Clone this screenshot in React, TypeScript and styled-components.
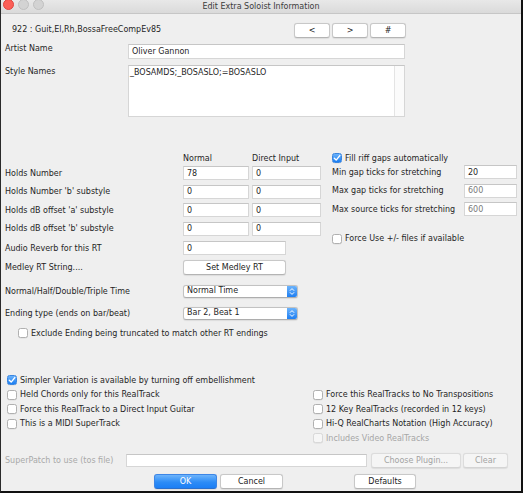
import React from "react";
import styled, { createGlobalStyle } from "styled-components";

const GlobalStyle = createGlobalStyle`
  html, body { margin: 0; padding: 0; }
  body {
    font-family: "DejaVu Sans", "Liberation Sans", sans-serif;
    font-size: 8px;
    color: #1f1f1f;
    background: #efefef;
  }
  * { box-sizing: border-box; }
`;

const Window = styled.div`
  width: 523px;
  height: 493px;
  background: #efefef;
  border-left: 1px solid #2a2a2a;
  border-right: 2px solid #111;
  border-bottom: 2px solid #111;
  display: flex;
  flex-direction: column;
  overflow: hidden;
`;

const TitleBar = styled.div`
  height: 14px;
  flex: none;
  display: grid;
  grid-template-columns: 1fr auto 1fr;
  align-items: center;
  background: linear-gradient(#e8e8e8, #dadada);
  border-bottom: 1px solid #c6c6c6;
`;

const Lights = styled.div`
  display: flex;
  gap: 4px;
  padding-left: 2px;
  margin-top: -4px;
`;

const Light = styled.span<{ $color: string; $edge: string }>`
  width: 11px;
  height: 11px;
  border-radius: 50%;
  background: ${(p) => p.$color};
  border: 1px solid ${(p) => p.$edge};
`;

const Title = styled.div`
  color: #3c3c3c;
  font-size: 8px;
  margin-top: -1px;
`;

const Body = styled.div`
  display: flex;
  flex-direction: column;
  padding-left: 4px;
`;

const TopRow = styled.div`
  margin-top: 8px;
  width: 401px;
  height: 16px;
  display: flex;
  align-items: center;
`;

const TrackName = styled.div`
  padding-left: 7px;
  margin-top: -2px;
  flex: 1;
`;

const NavGroup = styled.div`
  display: flex;
  gap: 2px;
`;

const Button = styled.button<{ $w: number; $primary?: boolean; $disabled?: boolean }>`
  width: ${(p) => p.$w}px;
  height: 15px;
  padding: 0;
  margin: 0;
  font-family: inherit;
  font-size: 8px;
  border-radius: 3px;
  border: 1px solid ${(p) => (p.$primary ? "#3d86e6" : p.$disabled ? "#dcdcdc" : "#c8c8c8")};
  border-bottom-color: ${(p) => (p.$primary ? "#2a6fcc" : p.$disabled ? "#d4d4d4" : "#b4b4b4")};
  background: ${(p) =>
    p.$primary
      ? "linear-gradient(#6db4fb, #2d8cf6 55%, #1c7ff5)"
      : p.$disabled
      ? "#f5f5f5"
      : "#ffffff"};
  color: ${(p) => (p.$primary ? "#ffffff" : p.$disabled ? "#a3a3a3" : "#222")};
  box-shadow: 0 0.5px 1px rgba(0, 0, 0, 0.08);
  display: flex;
  align-items: center;
  justify-content: center;
`;

const FormRow = styled.div<{ $h: number; $mt: number }>`
  display: grid;
  grid-template-columns: 123px 277px;
  height: ${(p) => p.$h}px;
  margin-top: ${(p) => p.$mt}px;
  align-items: start;
`;

const FormLabel = styled.div<{ $pt: number }>`
  padding-top: ${(p) => p.$pt}px;
`;

const TextBox = styled.div<{ $w?: number; $h?: number; $muted?: boolean }>`
  width: ${(p) => (p.$w ? `${p.$w}px` : "100%")};
  height: ${(p) => p.$h ?? 14}px;
  background: #fff;
  border: 1px solid #d6d6d6;
  border-top-color: #c6c6c6;
  padding-left: 3px;
  display: flex;
  align-items: center;
  color: ${(p) => (p.$muted ? "#7a7a7a" : "#1f1f1f")};
  overflow: hidden;
  white-space: nowrap;
`;

const TextArea = styled.div`
  height: 52px;
  background: #fff;
  border: 1px solid #d6d6d6;
  border-top-color: #c6c6c6;
  display: grid;
  grid-template-columns: 1fr 10px;
`;

const AreaText = styled.div`
  padding: 2px 1px;
`;

const ScrollTrack = styled.div`
  border-left: 1px solid #e4e4e4;
  background: #fbfbfb;
`;

const Middle = styled.div`
  margin-top: 33px;
  display: flex;
  align-items: flex-start;
`;

const LeftPanel = styled.div`
  width: 316px;
  display: flex;
  flex-direction: column;
`;

const GridRow = styled.div<{ $h: number; $mt?: number }>`
  display: grid;
  grid-template-columns: 175px 66px 69px;
  column-gap: 3px;
  align-items: center;
  height: ${(p) => p.$h}px;
  margin-top: ${(p) => p.$mt ?? 0}px;
`;

const ColHead = styled.div`
  padding-top: 2px;
`;

const Span = styled.div<{ $span: number }>`
  grid-column: span ${(p) => p.$span};
`;

const Popup = styled.div`
  width: 115px;
  height: 13px;
  background: #fff;
  border: 1px solid #c2c2c2;
  border-bottom-color: #adadad;
  border-radius: 3px;
  display: grid;
  grid-template-columns: 1fr 10px;
  overflow: hidden;
  box-shadow: 0 0.5px 1px rgba(0, 0, 0, 0.08);
`;

const PopupText = styled.div`
  padding-left: 3px;
  display: flex;
  align-items: center;
  margin-top: -1px;
`;

const Stepper = styled.div`
  background: linear-gradient(#6cb3fb, #1f7ff2);
  display: flex;
  align-items: center;
  justify-content: center;
`;

const CheckRow = styled.label<{ $h: number; $indent?: number; $mt?: number; $disabled?: boolean }>`
  display: flex;
  align-items: center;
  gap: 3px;
  height: ${(p) => p.$h}px;
  padding-left: ${(p) => p.$indent ?? 0}px;
  margin-top: ${(p) => p.$mt ?? 0}px;
  color: ${(p) => (p.$disabled ? "#a6a6a6" : "#1f1f1f")};
  white-space: nowrap;
`;

const Box = styled.span<{ $checked?: boolean; $disabled?: boolean }>`
  width: 10px;
  height: 10px;
  flex: none;
  border-radius: 2.5px;
  border: 1px solid ${(p) => (p.$checked ? "#3a86e0" : p.$disabled ? "#d8d8d8" : "#b0b0b0")};
  background: ${(p) =>
    p.$checked ? "linear-gradient(#6ab2fb, #1b7ef1)" : p.$disabled ? "#f6f6f6" : "#fff"};
  display: flex;
  align-items: center;
  justify-content: center;
  box-shadow: 0 0.5px 0.5px rgba(0, 0, 0, 0.08);
`;

const RightPanel = styled.div`
  margin-left: 11px;
  padding-top: 3px;
  display: flex;
  flex-direction: column;
`;

const RightRow = styled.div`
  display: grid;
  grid-template-columns: 132px 53px;
  align-items: center;
  height: 18.5px;
`;

const Bottom = styled.div`
  margin-top: 32px;
  padding-left: 2px;
  display: grid;
  grid-template-columns: 306px 1fr;
`;

const CheckColumn = styled.div<{ $pt?: number }>`
  display: flex;
  flex-direction: column;
  padding-top: ${(p) => p.$pt ?? 0}px;
`;

const PatchRow = styled.div`
  margin-top: 7.5px;
  height: 15px;
  display: flex;
  align-items: center;
`;

const PatchLabel = styled.div`
  width: 121px;
  color: #a9a9a9;
`;

const PatchGap = styled.div<{ $w: number }>`
  width: ${(p) => p.$w}px;
`;

const ActionRow = styled.div`
  margin-top: 5px;
  height: 16px;
  display: flex;
  align-items: center;
  padding-left: 149px;
  gap: 3px;
`;

const Spacer = styled.div<{ $w: number }>`
  width: ${(p) => p.$w}px;
`;

const Check = () => (
  <svg width="8" height="8" viewBox="0 0 8 8">
    <path d="M1.3 4.3 L3.2 6.1 L6.8 1.6" fill="none" stroke="#fff" strokeWidth="1.4" strokeLinecap="round" strokeLinejoin="round" />
  </svg>
);

const StepIcon = () => (
  <svg width="6" height="9" viewBox="0 0 6 9">
    <path d="M1.2 3.4 L3 1.6 L4.8 3.4 M1.2 5.6 L3 7.4 L4.8 5.6" fill="none" stroke="#fff" strokeWidth="1" strokeLinecap="round" strokeLinejoin="round" />
  </svg>
);

const CheckItem: React.FC<{
  label: string;
  h: number;
  checked?: boolean;
  disabled?: boolean;
  indent?: number;
  mt?: number;
}> = ({ label, h, checked, disabled, indent, mt }) => (
  <CheckRow $h={h} $indent={indent} $mt={mt} $disabled={disabled}>
    <Box $checked={checked} $disabled={disabled}>{checked && <Check />}</Box>
    <span>{label}</span>
  </CheckRow>
);

const holds = [
  { label: "Holds Number", normal: "78", direct: "0" },
  { label: "Holds Number 'b' substyle", normal: "0", direct: "0" },
  { label: "Holds dB offset 'a' substyle", normal: "0", direct: "0" },
  { label: "Holds dB offset 'b' substyle", normal: "0", direct: "0" },
];

const stretch = [
  { label: "Min gap ticks for stretching", value: "20", muted: false },
  { label: "Max gap ticks for stretching", value: "600", muted: true },
  { label: "Max source ticks for stretching", value: "600", muted: true },
];

export default function App() {
  return (
    <>
      <GlobalStyle />
      <Window>
        <TitleBar>
          <Lights>
            <Light $color="#fc5f57" $edge="#e0443e" />
            <Light $color="#d3d3d3" $edge="#c0c0c0" />
            <Light $color="#d3d3d3" $edge="#c0c0c0" />
          </Lights>
          <Title>Edit Extra Soloist Information</Title>
          <div />
        </TitleBar>
        <Body>
          <TopRow>
            <TrackName>922 : Guit,El,Rh,BossaFreeCompEv85</TrackName>
            <NavGroup>
              <Button $w={36}>&lt;</Button>
              <Button $w={36}>&gt;</Button>
              <Button $w={36}>#</Button>
            </NavGroup>
          </TopRow>
          <FormRow $h={15} $mt={6}>
            <FormLabel $pt={0}>Artist Name</FormLabel>
            <TextBox $h={15}>Oliver Gannon</TextBox>
          </FormRow>
          <FormRow $h={52} $mt={6}>
            <FormLabel $pt={2}>Style Names</FormLabel>
            <TextArea>
              <AreaText>_BOSAMDS;_BOSASLO;=BOSASLO</AreaText>
              <ScrollTrack />
            </TextArea>
          </FormRow>

          <Middle>
            <LeftPanel>
              <GridRow $h={14}>
                <div />
                <ColHead>Normal</ColHead>
                <ColHead>Direct Input</ColHead>
              </GridRow>
              {holds.map((r) => (
                <GridRow key={r.label} $h={18.5}>
                  <div>{r.label}</div>
                  <TextBox>{r.normal}</TextBox>
                  <TextBox>{r.direct}</TextBox>
                </GridRow>
              ))}
              <GridRow $h={20}>
                <div>Audio Reverb for this RT</div>
                <Span $span={2}>
                  <TextBox $w={103}>0</TextBox>
                </Span>
              </GridRow>
              <GridRow $h={19}>
                <div>Medley RT String....</div>
                <Span $span={2}>
                  <Button $w={103}>Set Medley RT</Button>
                </Span>
              </GridRow>
              <GridRow $h={20} $mt={4}>
                <div>Normal/Half/Double/Triple Time</div>
                <Span $span={2}>
                  <Popup>
                    <PopupText>Normal Time</PopupText>
                    <Stepper>
                      <StepIcon />
                    </Stepper>
                  </Popup>
                </Span>
              </GridRow>
              <GridRow $h={20} $mt={2}>
                <div>Ending type (ends on bar/beat)</div>
                <Span $span={2}>
                  <Popup>
                    <PopupText>Bar 2, Beat 1</PopupText>
                    <Stepper>
                      <StepIcon />
                    </Stepper>
                  </Popup>
                </Span>
              </GridRow>
              <CheckItem
                h={16}
                mt={2}
                indent={13}
                label="Exclude Ending being truncated to match other RT endings"
              />
            </LeftPanel>

            <RightPanel>
              <CheckItem h={10} checked label="Fill riff gaps automatically" />
              {stretch.map((r) => (
                <RightRow key={r.label}>
                  <div>{r.label}</div>
                  <TextBox $muted={r.muted}>{r.value}</TextBox>
                </RightRow>
              ))}
              <CheckItem h={16} mt={12} label="Force Use +/- files if available" />
            </RightPanel>
          </Middle>

          <Bottom>
            <CheckColumn>
              <CheckItem h={14.5} checked label="Simpler Variation is available by turning off embellishment" />
              <CheckItem h={14.5} label="Held Chords only for this RealTrack" />
              <CheckItem h={14.5} label="Force this RealTrack to a Direct Input Guitar" />
              <CheckItem h={14.5} label="This is a MIDI SuperTrack" />
            </CheckColumn>
            <CheckColumn $pt={14.5}>
              <CheckItem h={14.5} label="Force this RealTracks to No Transpositions" />
              <CheckItem h={14.5} label="12 Key RealTracks (recorded in 12 keys)" />
              <CheckItem h={14.5} label="Hi-Q RealCharts Notation (High Accuracy)" />
              <CheckItem h={14.5} disabled label="Includes Video RealTracks" />
            </CheckColumn>
          </Bottom>

          <PatchRow>
            <PatchLabel>SuperPatch to use (tos file)</PatchLabel>
            <TextBox $w={241} $h={13} />
            <PatchGap $w={4} />
            <Button $w={90} $disabled>Choose Plugin...</Button>
            <PatchGap $w={2} />
            <Button $w={45} $disabled>Clear</Button>
          </PatchRow>

          <ActionRow>
            <Button $w={63} $primary>OK</Button>
            <Button $w={63}>Cancel</Button>
            <Spacer $w={65} />
            <Button $w={62}>Defaults</Button>
          </ActionRow>
        </Body>
      </Window>
    </>
  );
}
